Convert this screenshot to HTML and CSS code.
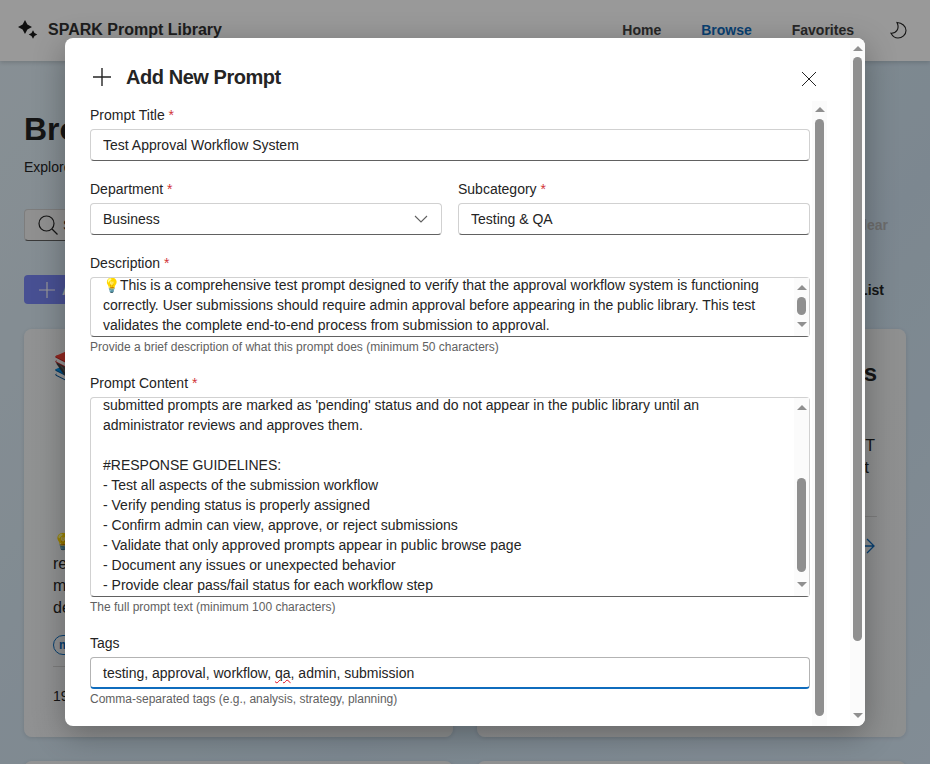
FILE: index.html
```html
<!DOCTYPE html>
<html lang="en">
<head>
    <meta charset="UTF-8">
    <title>SPARK Prompt Library</title>
    <link rel="stylesheet" href="styles.css">
</head>
<body>
<div class="page">
    <header class="topbar">
        <div class="brand">
            <svg class="brand-icon" width="28" height="28" viewBox="0 0 28 28"><path d="M9 4 L11.400 8.600 L16 11 L11.400 13.400 L9 18 L6.600 13.400 L2 11 L6.600 8.600 Z M17 14.200 L18.500 17 L21.300 18.500 L18.500 20 L17 22.800 L15.500 20 L12.700 18.500 L15.500 17 Z" fill="#1a1a1a"/></svg>
            <span>SPARK Prompt Library</span>
        </div>
        <nav class="nav">
            <a>Home</a>
            <a class="active">Browse</a>
            <a>Favorites</a>
            <svg width="20" height="20" viewBox="0 0 20 20"><path d="M9 2.500 C14 3 18 6 18 10.500 C18 15 14 18 10 18 C7 18 4.500 16 3 13.200 C8 13.500 12 9 9 2.500 Z" fill="none" stroke="#242424" stroke-width="1.100"/></svg>
        </nav>
    </header>

    <main class="content">
        <h1>Browse Prompts</h1>
        <p class="lead">Explore and discover prompts for your work</p>
        <div class="search-row">
            <div class="search">
                <svg width="22" height="22" viewBox="0 0 22 22"><circle cx="9.500" cy="9.500" r="7.500" fill="none" stroke="#242424" stroke-width="1.200"/><path d="M15 15 L20.500 20.500" stroke="#242424" stroke-width="1.200"/></svg>
                <span>Search prompts</span>
            </div>
            <span class="clear">Clear</span>
        </div>
        <div class="action-row">
            <button class="add-btn">
                <svg width="18" height="18" viewBox="0 0 18 18"><path d="M9 1 V17 M1 9 H17" stroke="#fff" stroke-width="1.200"/></svg>
                Add New Prompt
            </button>
            <span class="view-toggle">List</span>
        </div>
        <div class="cards">
            <article class="card">
                <div class="card-emoji">📚</div>
                <div class="card-text">💡 Test prompt<br>review<br>manage<br>describe</div>
                <span class="chip">marketing</span>
                <hr class="card-rule">
                <div class="card-foot">19 views</div>
            </article>
            <article class="card card-right">
                <h2>Prompt Templates</h2>
                <div class="card-text">Reusable ChatGPT<br><span class="short-line">prompt</span></div>
                <hr class="card-rule">
                <svg class="card-arrow" width="20" height="20" viewBox="0 0 20 20"><path d="M1 10 H18 M11 3 L18 10 L11 17" fill="none" stroke="#0f6cbd" stroke-width="1.300"/></svg>
            </article>
            <article class="card"></article>
            <article class="card"></article>
        </div>
    </main>

    <div class="overlay">
        <div class="modal">
            <div class="modal-inner">
                <div class="modal-head">
                    <svg class="head-icon" width="24" height="24" viewBox="0 0 24 24"><path d="M12 3 V21 M3 12 H21" stroke="#242424" stroke-width="1.400"/></svg>
                    <h2>Add New Prompt</h2>
                    <button class="close-btn"><svg width="16" height="16" viewBox="0 0 16 16"><path d="M1 1 L15 15 M15 1 L1 15" stroke="#242424" stroke-width="1"/></svg></button>
                </div>
                <form class="modal-body">
                    <div class="field">
                        <label>Prompt Title <em>*</em></label>
                        <input type="text" value="Test Approval Workflow System">
                    </div>
                    <div class="field-pair">
                        <div class="field">
                            <label>Department <em>*</em></label>
                            <div class="select">
                                <span>Business</span>
                                <svg width="14" height="14" viewBox="0 0 14 14"><path d="M1 4 L7 10 L13 4" fill="none" stroke="#616161" stroke-width="1.100"/></svg>
                            </div>
                        </div>
                        <div class="field">
                            <label>Subcategory <em>*</em></label>
                            <input type="text" value="Testing &amp; QA">
                        </div>
                    </div>
                    <div class="field">
                        <label>Description <em>*</em></label>
                        <div class="textbox">
                            <textarea class="desc" id="desc" spellcheck="false">

💡This is a comprehensive test prompt designed to verify that the approval workflow system is functioning correctly. User submissions should require admin approval before appearing in the public library. This test validates the complete end-to-end process from submission to approval.

</textarea>
                            <div class="sbar sbar-desc"><i class="arrow-up"></i><b class="thumb"></b><i class="arrow-down"></i></div>
                        </div>
                        <small>Provide a brief description of what this prompt does (minimum 50 characters)</small>
                    </div>
                    <div class="field">
                        <label>Prompt Content <em>*</em></label>
                        <div class="textbox">
                            <textarea class="body-text" id="content" spellcheck="false">
#CONTEXT:
Adopt the role of a quality assurance specialist.

#ROLE:
You verify that every step of the approval workflow behaves as intended.

#GOAL:
Make sure that all
submitted prompts are marked as 'pending' status and do not appear in the public library until an administrator reviews and approves them.

#RESPONSE GUIDELINES:
- Test all aspects of the submission workflow
- Verify pending status is properly assigned
- Confirm admin can view, approve, or reject submissions
- Validate that only approved prompts appear in public browse page
- Document any issues or unexpected behavior
- Provide clear pass/fail status for each workflow step
</textarea>
                            <div class="sbar sbar-content"><i class="arrow-up"></i><b class="thumb"></b><i class="arrow-down"></i></div>
                        </div>
                        <small>The full prompt text (minimum 100 characters)</small>
                    </div>
                    <div class="field">
                        <label>Tags</label>
                        <div class="tags-input">testing, approval, workflow, <span class="misspelt">qa</span>, admin, submission</div>
                        <small>Comma-separated tags (e.g., analysis, strategy, planning)</small>
                    </div>
                    <div class="sbar sbar-body"><i class="arrow-up"></i><b class="thumb"></b></div>
                </form>
            </div>
            <div class="sbar sbar-modal"><i class="arrow-up"></i><b class="thumb"></b><i class="arrow-down"></i></div>
        </div>
    </div>
</div>
<script src="script.js"></script>
</body>
</html>
```

FILE: styles.css
```css
*{
    box-sizing: border-box;
}
html, body{
    margin: 0;
    background: #fff;
    overflow: hidden;
}
body{
    font-family: "Liberation Sans", Arial, sans-serif;
    color: #242424;
    font-size: 14px;
}
.page{
    position: relative;
    width: 930px;
    height: 764px;
    overflow: hidden;
    background: linear-gradient(135deg, #e3f0f8, #cfe2f0 65%, #d9eaf8);
}

/* top bar */
.topbar{
    height: 61px;
    background: #fff;
    box-shadow: 0 2px 4px rgba(0,0,0,.14);
    display: flex;
    align-items: center;
    justify-content: space-between;
    padding: 0 22px 2px 16px;
}
.brand{
    display: flex;
    align-items: center;
    gap: 4px;
    font-size: 16px;
    font-weight: bold;
    color: #333;
}
.nav{
    display: flex;
    align-items: center;
    gap: 40px;
    font-weight: bold;
    color: #424242;
}
.nav .active{
    color: #0f6cbd;
}
.nav svg{
    margin-left: -6px;
}

/* page behind the dialog */
.content{
    padding: 52px 24px 0;
}
h1{
    margin: 0;
    font-size: 32px;
    line-height: 32px;
}
.lead{
    margin: 12px 0 0;
    line-height: 20px;
}
.search-row, .action-row{
    display: flex;
    align-items: center;
    justify-content: space-between;
}
.search-row{
    margin-top: 32px;
}
.search{
    width: 400px;
    height: 32px;
    background: #f0f0f0;
    border: 1px solid #d1d1d1;
    border-bottom-color: #616161;
    border-radius: 4px;
    display: flex;
    align-items: center;
    gap: 4px;
    padding: 0 12px;
}
.clear{
    font-weight: bold;
    color: #b5b5b5;
    margin-right: 18px;
}
.action-row{
    margin-top: 34px;
}
.add-btn{
    height: 29px;
    background: #7885f5;
    color: #fff;
    border: 0;
    border-radius: 4px;
    display: flex;
    align-items: center;
    gap: 6px;
    padding: 0 14px;
    font: bold 14px "Liberation Sans", Arial, sans-serif;
}
.view-toggle{
    font-weight: bold;
    margin-right: 22px;
}
.cards{
    margin-top: 25px;
    display: grid;
    grid-template-columns: 429px 429px;
    grid-auto-rows: 408px;
    gap: 24px;
}
.card{
    background: linear-gradient(120deg, #f2f4f5, #eceeef);
    border-radius: 8px;
    box-shadow: 0 1px 4px rgba(0,0,0,.12);
    padding: 20px 29px;
}
.card-emoji{
    margin-top: 2px;
    font-size: 32px;
    line-height: 32px;
}
.card .card-text{
    font-size: 16px;
    line-height: 22px;
    margin-top: 148px;
}
.chip{
    display: inline-block;
    margin-top: 16px;
    height: 20px;
    padding: 0 5px;
    border: 1px solid #0f6cbd;
    border-radius: 10px;
    color: #0f6cbd;
    font-size: 12px;
    font-weight: bold;
    line-height: 18px;
}
.card-rule{
    margin: 11px 0 0;
    border: 0;
    border-top: 1px solid #d1d1d1;
}
.card-foot{
    margin-top: 20px;
    line-height: 18px;
}
.card-right{
    text-align: right;
}
.card-right h2{
    margin: 0;
    font-size: 24px;
    line-height: 48px;
}
.card-right .card-text{
    margin-top: 38px;
    padding-right: 2px;
}
.short-line{
    margin-right: 6px;
}
.card-right .card-rule{
    margin-top: 37px;
}
.card-arrow{
    display: block;
    margin: 19px 0 0 auto;
    transform: translateX(-1px);
}

/* dialog */
.overlay{
    position: absolute;
    inset: 0;
    background: rgba(0,0,0,.4);
    display: flex;
    justify-content: center;
    padding-top: 38px;
}
.modal{
    position: relative;
    width: 800px;
    height: 688px;
    background: #fff;
    border-radius: 8px;
    box-shadow: 0 8px 32px rgba(0,0,0,.3);
    overflow: hidden;
}
.modal-inner{
    padding: 0 38px 0 24px;
}
.modal-head{
    height: 63px;
    padding: 16px 0 0 1px;
    display: flex;
    align-items: center;
    gap: 12px;
}
.head-icon{
    margin-bottom: 2px;
}
.modal-head h2{
    margin: 0;
    flex: 1;
    font-size: 20px;
    font-weight: bold;
    letter-spacing: -0.45px;
}
.close-btn{
    width: 32px;
    height: 32px;
    margin: 2px 2px 0 0;
    padding: 0;
    background: none;
    border: 0;
    display: flex;
    align-items: center;
    justify-content: center;
}
.modal-body{
    position: relative;
    height: 625px;
    padding: 4px 17px 0 1px;
}
.field{
    margin-bottom: 18px;
}
.field-pair{
    display: grid;
    grid-template-columns: 1fr 1fr;
    gap: 16px;
}
label{
    display: block;
    line-height: 20px;
    margin-bottom: 4px;
}
label em{
    color: #d13438;
    font-style: normal;
}
input, textarea, .select, .tags-input{
    display: block;
    width: 100%;
    background: #fff;
    border: 1px solid #d1d1d1;
    border-bottom-color: #616161;
    border-radius: 4px;
    color: #242424;
    font: 14px/20px "Liberation Sans", Arial, sans-serif;
    outline: none;
}
input, .select, .tags-input{
    height: 32px;
    padding: 5px 12px;
}
.select{
    display: flex;
    align-items: center;
    justify-content: space-between;
    padding-right: 13px;
}
.tags-input{
    border-color: #b3b3b3;
    border-bottom: 2px solid #0f6cbd;
}
.misspelt{
    text-decoration: underline wavy #e00b1c 1px;
}
.textbox{
    position: relative;
}
textarea{
    padding: 5px 28px 5px 12px;
    resize: none;
    overflow: hidden;
}
.desc{
    height: 60px;
}
.body-text{
    height: 200px;
}
small{
    display: block;
    margin-top: 2px;
    font-size: 12px;
    line-height: 16px;
    color: #616161;
}

.sbar{
    position: absolute;
    right: 0;
    top: 0;
    width: 15px;
    height: 100%;
    background: #fbfbfb;
    display: flex;
    flex-direction: column;
    align-items: center;
    padding-top: var(--pad-top);
    padding-bottom: var(--pad-bottom);
}
.thumb{
    display: block;
    width: 9px;
    height: var(--thumb-h);
    margin-top: var(--thumb-top);
    background: #8f8f8f;
    border-radius: 5px;
}
.arrow-up, .arrow-down{
    display: block;
    width: 0;
    height: 0;
    border-left: 5px solid transparent;
    border-right: 5px solid transparent;
}
.arrow-up{
    border-bottom: 5px solid #8f8f8f;
}
.arrow-down{
    margin-top: auto;
    border-top: 5px solid #8f8f8f;
}
.sbar-modal{
    --pad-top: 8px;
    --pad-bottom: 8px;
    --thumb-top: 6px;
    --thumb-h: 584px;
}
.sbar-body{
    --pad-top: 6px;
    --pad-bottom: 0px;
    --thumb-top: 7px;
    --thumb-h: 597px;
}
.sbar-desc{
    top: 1px;
    right: 1px;
    height: 58px;
    --pad-top: 7px;
    --pad-bottom: 9px;
    --thumb-top: 7px;
    --thumb-h: 18px;
}
.sbar-content{
    top: 1px;
    right: 1px;
    height: 198px;
    --pad-top: 7px;
    --pad-bottom: 9px;
    --thumb-top: 68px;
    --thumb-h: 94px;
}
```

FILE: script.js
```js
// both text boxes are open part way down their text
document.getElementById("desc").scrollTop = 28
document.getElementById("content").scrollTop = 168
```
